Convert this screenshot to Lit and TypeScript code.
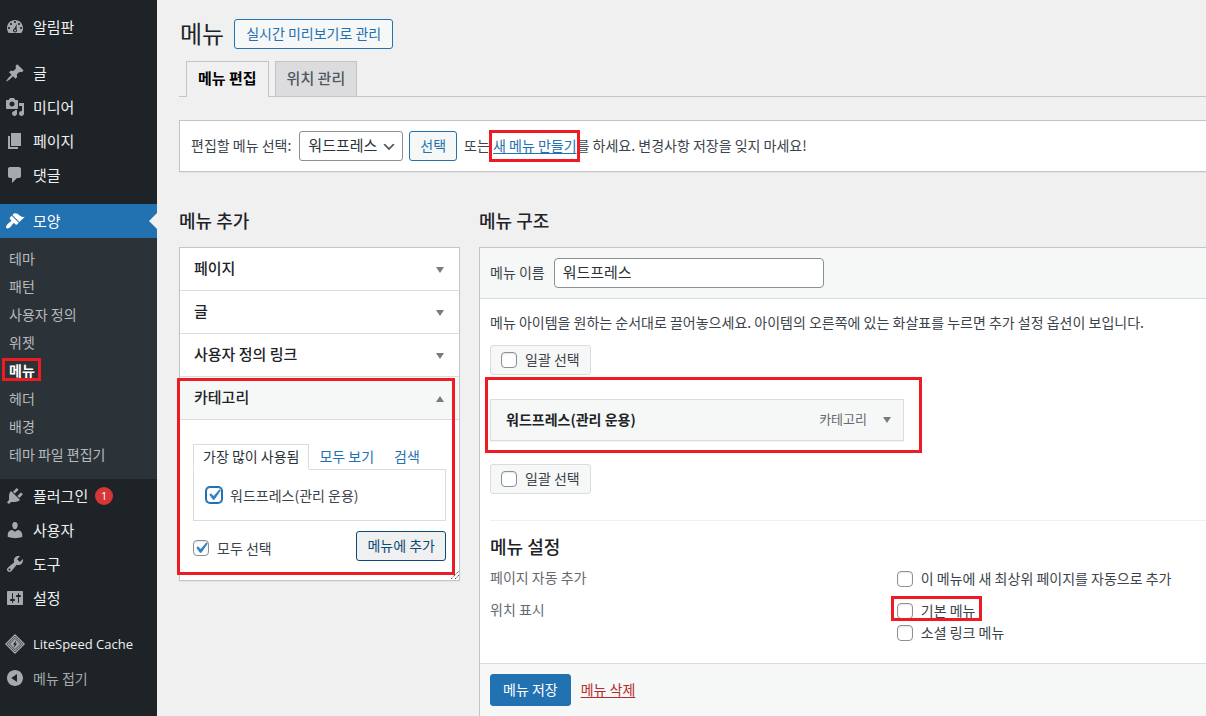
import { LitElement, html, css, svg, nothing } from "lit";
import { customElement, property } from "lit/decorators.js";
import { classMap } from "lit/directives/class-map.js";

const ICONS: Record<string, unknown> = {
  dashboard: svg`<path fill-rule="evenodd" d="M3.76 16h12.48c1.1-1.37 1.76-3.11 1.76-5 0-4.42-3.58-8-8-8s-8 3.58-8 8c0 1.89.66 3.63 1.76 5zM10 4c.55 0 1 .45 1 1s-.45 1-1 1-1-.45-1-1 .45-1 1-1zM6 6c.55 0 1 .45 1 1s-.45 1-1 1-1-.45-1-1 .45-1 1-1zM14 6c.55 0 1 .45 1 1s-.45 1-1 1-1-.45-1-1 .45-1 1-1zM4 10c.55 0 1 .45 1 1s-.45 1-1 1-1-.45-1-1 .45-1 1-1zM16 10c.55 0 1 .45 1 1s-.45 1-1 1-1-.45-1-1 .45-1 1-1zM11.7 7l-.2 5.2c.3.4.5.8.5 1.3 0 1.1-.9 2-2 2s-2-.9-2-2c0-1 .7-1.800 1.600-2zM10 12.500a1 1 0 1 0 0 2 1 1 0 0 0 0-2z"/>`,
  post: svg`<path d="M10.44 3.02l1.82-1.82 6.36 6.35-1.83 1.82c-1.05-.68-2.48-.57-3.41.36l-.75.75c-.92.93-1.04 2.35-.35 3.41l-1.83 1.82-2.41-2.41-2.8 2.79c-.42.42-3.38 2.71-3.8 2.29s1.86-3.39 2.28-3.81l2.79-2.79L4.1 9.36l1.83-1.82c1.05.69 2.48.57 3.4-.36l.75-.75c.93-.92 1.05-2.35.36-3.41z"/>`,
  media: svg`<path d="M13 11V4c0-.55-.45-1-1-1h-1.67L9 1H5L3.67 3H2c-.55 0-1 .45-1 1v7c0 .55.45 1 1 1h10c.55 0 1-.45 1-1zM7 4.5c1.38 0 2.5 1.12 2.5 2.5S8.38 9.500 7 9.500 4.500 8.380 4.500 7 5.620 4.500 7 4.500zM14 6h5v10.500c0 1.380-1.120 2.500-2.500 2.500S14 17.880 14 16.500s1.120-2.500 2.500-2.500c.17 0 .34.02.5.05V9h-3V6zm-4 8.050V13h2v3.500c0 1.380-1.120 2.500-2.500 2.500S7 17.880 7 16.500 8.120 14 9.500 14c.17 0 .34.02.5.05z"/>`,
  page: svg`<path d="M6 15V2h10v13H6zm-1 1h8v2H3V5h2v11z"/>`,
  comments: svg`<path d="M5 2h9c1.100 0 2 .9 2 2v7c0 1.100-.9 2-2 2h-2l-5 5v-5H5c-1.100 0-2-.9-2-2V4c0-1.100.9-2 2-2z"/>`,
  appearance: svg`<path d="M14.48 11.06L7.41 3.99l1.5-1.5c.5-.56 2.3-.47 3.51.32 1.21.8 1.43 1.28 2.91 2.1 1.18.64 2.45 1.26 4.45.85zm-.71.71L6.7 4.7 4.93 6.47c-.39.39-.39 1.02 0 1.41l1.06 1.06c.39.39.39 1.03 0 1.42-.6.6-1.43 1.11-2.21 1.69-.35.26-.7.53-1.01.84C1.43 14.23.4 16.08 1.4 17.07c.99 1 2.84-.03 4.18-1.36.31-.31.58-.66.85-1.02.57-.78 1.08-1.61 1.69-2.21.39-.39 1.02-.39 1.41 0l1.06 1.06c.39.39 1.02.39 1.41 0z"/>`,
  plugins: svg`<path d="M13.11 4.36L9.87 7.6 8 5.73l3.24-3.24c.35-.34 1.05-.2 1.56.32.52.51.66 1.21.31 1.55zm-8 1.77l.91-1.12 9.01 9.01-1.19.84c-.71.71-2.63 1.16-3.82 1.16H6.14L4.9 17.26c-.59.59-1.54.59-2.12 0-.59-.58-.59-1.53 0-2.12l1.24-1.24v-3.88c0-1.13.4-3.19 1.09-3.89zm7.26 3.97l3.24-3.24c.34-.35 1.04-.21 1.55.31.52.51.66 1.21.31 1.55l-3.24 3.25z"/>`,
  users: svg`<path d="M10 9.25c-2.27 0-2.73-3.44-2.73-3.44C7 4.02 7.82 2 9.97 2c2.16 0 2.98 2.02 2.71 3.81 0 0-.41 3.44-2.68 3.44zm0 2.57L12.72 10c2.39 0 4.52 2.33 4.52 4.53v2.49s-3.65 1.13-7.24 1.13c-3.65 0-7.24-1.13-7.24-1.13v-2.49c0-2.25 1.94-4.48 4.47-4.48z"/>`,
  tools: svg`<path d="M16.68 9.77c-1.34 1.34-3.3 1.67-4.95.99l-5.41 6.52c-.99.99-2.59.99-3.58 0s-.99-2.59 0-3.57l6.52-5.42c-.68-1.65-.35-3.61.99-4.95 1.28-1.28 3.12-1.62 4.72-1.06l-2.89 2.89 2.82 2.82 2.86-2.87c.53 1.58.18 3.39-1.08 4.65zM3.81 16.21c.4.39 1.04.39 1.43 0 .4-.4.4-1.04 0-1.43-.39-.4-1.03-.4-1.43 0-.39.39-.39 1.03 0 1.43z"/>`,
  settings: svg`<path d="M18 16V4c0-.55-.45-1-1-1H3c-.55 0-1 .45-1 1v12c0 .55.45 1 1 1h14c.55 0 1-.45 1-1zM8 11h1c.55 0 1 .45 1 1s-.45 1-1 1H8v1.5c0 .28-.22.5-.5.5s-.5-.22-.5-.5V13H6c-.55 0-1-.45-1-1s.45-1 1-1h1V5.5c0-.28.22-.5.5-.5s.5.22.5.5V11zm5-2h-1c-.55 0-1-.45-1-1s.45-1 1-1h1V5.5c0-.28.22-.5.5-.5s.5.22.5.5V7h1c.55 0 1 .45 1 1s-.45 1-1 1h-1v5.5c0 .28-.22.5-.5.5s-.5-.22-.5-.5V9z"/>`,
  litespeed: svg`<path d="M10 0l10 10-10 10L0 10z"/><path d="M10 2.200l7.800 7.800-7.800 7.800L2.200 10z" fill="none" stroke="#1d2327" stroke-width=".7"/><path d="M10 4.400l5.600 5.600-5.600 5.600L4.400 10z" fill="none" stroke="#1d2327" stroke-width=".7"/><path d="M11.300 6.200L8 10.500h1.600l-1 3.400 3.500-4.500h-1.700z" fill="#1d2327"/>`,
  collapse: svg`<path d="M10 2c4.420 0 8 3.580 8 8s-3.580 8-8 8-8-3.580-8-8 3.580-8 8-8zm2 11.900V6.100L6.200 10z"/>`,
};

@customElement("wp-icon")
class WpIcon extends LitElement {
  @property() name = "";

  static styles = css`
    :host { display: block; width: 20px; height: 20px; flex: none; }
    svg { display: block; width: 100%; height: 100%; fill: currentColor; }
  `;

  render() {
    return html`<svg viewBox="0 0 20 20" aria-hidden="true">${ICONS[this.name]}</svg>`;
  }
}

interface MenuEntry {
  icon: string;
  label: string;
  count?: number;
  latin?: boolean;
  children?: string[];
}

const MENU_GROUPS: MenuEntry[][] = [
  [{ icon: "dashboard", label: "알림판" }],
  [
    { icon: "post", label: "글" },
    { icon: "media", label: "미디어" },
    { icon: "page", label: "페이지" },
    { icon: "comments", label: "댓글" },
  ],
  [
    {
      icon: "appearance",
      label: "모양",
      children: ["테마", "패턴", "사용자 정의", "위젯", "메뉴", "헤더", "배경", "테마 파일 편집기"],
    },
    { icon: "plugins", label: "플러그인", count: 1 },
    { icon: "users", label: "사용자" },
    { icon: "tools", label: "도구" },
    { icon: "settings", label: "설정" },
  ],
  [{ icon: "litespeed", label: "LiteSpeed Cache", latin: true }],
];

@customElement("admin-sidebar")
class AdminSidebar extends LitElement {
  static styles = css`
    :host { display: block; background: #1d2327; padding: 10px 0; }
    ul { list-style: none; margin: 0; padding: 0; }
    .group + .group { margin-top: 12px; }
    .link {
      position: relative; display: flex; align-items: center; gap: 8px; width: 100%;
      height: 34px; padding: 0 5px; box-sizing: border-box; border: 0; background: none;
      font: inherit; font-size: 15px; color: #f0f0f1; text-decoration: none; text-align: left;
      white-space: nowrap;
    }
    .link wp-icon { color: #a7aaad; }
    .latin { font-family: "Open Sans", sans-serif; font-size: 13px; }
    .current { background: #2271b1; color: #fff; }
    .current wp-icon { color: #fff; }
    .current::after {
      content: ""; position: absolute; right: 0; top: 9px;
      border: 8px solid transparent; border-left: 0; border-right-color: #f0f0f1;
    }
    .count {
      width: 18px; height: 18px; border-radius: 9px; background: #d63638; color: #fff;
      font: 11px/18px "Open Sans", sans-serif; text-align: center; margin-left: -1px;
    }
    .submenu { background: #2c3338; padding: 6px 0 11px; }
    .sub {
      display: block; padding: 0 9px; line-height: 28px; font-size: 14px;
      color: #b7babd; text-decoration: none;
    }
    .sub.active { color: #fff; font-weight: 700; }
    .spot { position: relative; display: inline-block; vertical-align: top; }
    .mark {
      position: absolute; inset: 2px -6px 3px -7px;
      border: 3px solid #ed1c24; pointer-events: none;
    }
    .collapse { color: #a7aaad; font-size: 14px; }
  `;

  private entry(e: MenuEntry) {
    return html`<li>
      <a href="#" class=${classMap({ link: true, current: !!e.children, latin: !!e.latin })}>
        <wp-icon name=${e.icon}></wp-icon><span>${e.label}</span>
        ${e.count ? html`<span class="count">${e.count}</span>` : nothing}
      </a>
      ${e.children
        ? html`<ul class="submenu">
            ${e.children.map((c) => {
              const active = c === "메뉴";
              return html`<li><a href="#" class=${classMap({ sub: true, active })}>
                ${active ? html`<span class="spot">${c}<span class="mark"></span></span>` : c}</a></li>`;
            })}
          </ul>`
        : nothing}
    </li>`;
  }

  render() {
    return html`<nav aria-label="관리자 메뉴">
      ${MENU_GROUPS.map((g) => html`<ul class="group">${g.map((e) => this.entry(e))}</ul>`)}
      <button class="link collapse" type="button"><wp-icon name="collapse"></wp-icon><span>메뉴 접기</span></button>
    </nav>`;
  }
}

const controls = css`
  * { box-sizing: border-box; }
  h1, h2, h3, p, ul, dl, dd, fieldset, legend { margin: 0; padding: 0; border: 0; font-weight: 400; }
  a { color: #2271b1; }
  button, input, select { font: inherit; margin: 0; }
  .btn {
    display: inline-flex; align-items: center; justify-content: center; height: 30px; padding: 0 10px 2px;
    border: 1px solid #2271b1; border-radius: 3px; background: #f6f7f7; color: #2271b1;
    font-size: 14px; text-decoration: none; white-space: nowrap;
  }
  .check {
    appearance: none; flex: none; width: 16px; height: 16px; border: 1px solid #8c8f94;
    border-radius: 4px; background: #fff; box-shadow: inset 0 1px 2px rgba(0, 0, 0, 0.1);
  }
  .check:checked {
    background: #fff url("data:image/svg+xml,%3Csvg xmlns='http://www.w3.org/2000/svg' viewBox='0 0 20 20'%3E%3Cpath d='M14.830 4.890l1.340.940-5.810 8.380H9.020L5.780 9.670l1.340-1.250 2.570 2.400z' fill='%233582c4'/%3E%3C/svg%3E") center / 22px 22px no-repeat;
  }
  .option { display: flex; align-items: center; gap: 8px; }
  .mark { position: absolute; border: 3px solid #ed1c24; pointer-events: none; z-index: 1; }
  .arrow { display: block; width: 8px; height: 6px; fill: #787c82; }
`;

const down = html`<svg class="arrow" viewBox="0 0 8 6" aria-hidden="true"><path d="M0 0h8L4 6z"/></svg>`;
const up = html`<svg class="arrow" viewBox="0 0 8 6" aria-hidden="true"><path d="M0 6h8L4 0z"/></svg>`;

@customElement("add-items-panel")
class AddItemsPanel extends LitElement {
  static styles = [
    controls,
    css`
      :host { display: block; }
      .box { position: relative; background: #fff; border: 1px solid #c3c4c7; box-shadow: 0 1px 1px rgba(0, 0, 0, 0.04); }
      .head {
        display: flex; align-items: center; justify-content: space-between; width: 100%; height: 43px;
        padding: 0 15px 2px 14px; border: 0; border-bottom: 1px solid #dcdcde; background: #fff;
        color: #1d2327; font-size: 15px; font-weight: 500;
      }
      .head .arrow { margin-top: 4px; }
      .section { position: relative; }
      .section .head.open { background: #f6f7f7; }
      .body { padding: 24px 13px 19px; }
      .tabs { display: flex; height: 26px; margin-bottom: -1px; }
      .tab { padding: 0 9px; border: 1px solid transparent; line-height: 22px; font-size: 14px; text-decoration: none; white-space: nowrap; }
      .tab.on { border-color: #dcdcde; border-bottom-color: #fff; background: #fff; color: #2c3338; position: relative; }
      .list { border: 1px solid #dcdcde; height: 52px; padding: 0 12px; display: flex; align-items: center; }
      .focus { border-color: #2271b1; box-shadow: 0 0 0 1px #2271b1; }
      .actions { display: flex; align-items: center; justify-content: space-between; margin-top: 10px; }
      .actions .option { padding-top: 3px; }
      .add { background: #f0f0f1; border-color: #0a4b78; color: #0a4b78; }
      .section .mark { inset: 1px 4px 5px -3px; }
      .grip { position: absolute; right: 0; bottom: 1px; width: 8px; height: 8px; stroke: #50575e; fill: none; z-index: 2; }
    `,
  ];

  render() {
    return html`<div class="box">
      ${["페이지", "글", "사용자 정의 링크"].map(
        (t) => html`<button class="head" type="button" aria-expanded="false">${t}${down}</button>`,
      )}
      <div class="section">
        <button class="head open" type="button" aria-expanded="true">카테고리${up}</button>
        <div class="body">
          <div class="tabs">
            <a href="#" class="tab on">가장 많이 사용됨</a>
            <a href="#" class="tab">모두 보기</a>
            <a href="#" class="tab">검색</a>
          </div>
          <div class="list">
            <label class="option"><input class="check focus" type="checkbox" checked />워드프레스(관리 운용)</label>
          </div>
          <div class="actions">
            <label class="option"><input class="check" type="checkbox" checked />모두 선택</label>
            <button class="btn add" type="button">메뉴에 추가</button>
          </div>
        </div>
        <span class="mark"></span>
      </div>
      <svg class="grip" viewBox="0 0 8 8" aria-hidden="true"><path d="M0 8L8 0M4 8l4-4" stroke-dasharray="1.500 .6"/></svg>
    </div>`;
  }
}

@customElement("menu-structure")
class MenuStructure extends LitElement {
  static styles = [
    controls,
    css`
      :host { display: flex; flex-direction: column; flex: 1; border: 1px solid #c3c4c7; border-right: 0; border-bottom: 0; background: #fff; }
      .bar { background: #f6f7f7; padding: 10px; display: flex; align-items: center; gap: 9px; }
      .top { border-bottom: 1px solid #dcdcde; height: 51px; }
      .top label { padding-bottom: 2px; }
      .name {
        width: 270px; height: 30px; padding: 0 8px 3px; border: 1px solid #8c8f94; border-radius: 4px;
        background: #fff; color: #2c3338; font-size: 15px;
      }
      .content { padding: 13px 0 20px 10px; }
      .hint { line-height: 20px; margin-bottom: 13px; }
      .bulk {
        display: inline-flex; height: 30px; padding: 0 10px 2px; border: 1px solid #dcdcde; border-radius: 3px;
        background: #f6f7f7; vertical-align: top;
      }
      .option .check { margin-top: 2px; }
      .items { position: relative; margin: 24px 0 23px; width: 414px; max-width: 100%; }
      .item {
        display: flex; align-items: center; height: 42px; padding: 0 12px 2px 15px; gap: 16px;
        border: 1px solid #dcdcde; background: #f6f7f7; box-shadow: 0 1px 1px rgba(0, 0, 0, 0.04);
      }
      .item .arrow { margin-top: 2px; }
      .title { flex: 1; font-weight: 700; color: #1d2327; }
      .type { color: #646970; font-size: 13px; }
      .items .mark { inset: -22px -18px -12px -5px; }
      .settings { margin-top: 26px; border-top: 1px solid #f0f0f1; padding-top: 12px; }
      h3 { font-size: 18px; line-height: 26px; font-weight: 500; color: #1d2327; margin-bottom: 8px; }
      .row { display: grid; grid-template-columns: 25fr 19fr; line-height: 22px; margin-bottom: 10px; }
      .row:last-child { margin-bottom: 0; }
      .row dt { color: #646970; line-height: 20px; }
      .spot { position: relative; width: max-content; }
      .spot .mark { inset: -3px -7px 0 -6px; }
      .foot { flex: 1; align-items: flex-start; border-top: 1px solid #dcdcde; gap: 10px; }
      .save { height: 32px; padding: 0 12px 2px; background: #2271b1; color: #fff; }
      .delete { color: #b32d2e; line-height: 30px; text-underline-offset: 2px; }
    `,
  ];

  private bulk() {
    return html`<label class="option bulk"><input class="check" type="checkbox" />일괄 선택</label>`;
  }

  render() {
    return html`
      <div class="bar top">
        <label for="menu-name">메뉴 이름</label>
        <input class="name" id="menu-name" type="text" value="워드프레스" />
      </div>
      <div class="content">
        <p class="hint">메뉴 아이템을 원하는 순서대로 끌어놓으세요. 아이템의 오른쪽에 있는 화살표를 누르면 추가 설정 옵션이 보입니다.</p>
        ${this.bulk()}
        <div class="items">
          <div class="item"><span class="title">워드프레스(관리 운용)</span><span class="type">카테고리</span>${down}</div>
          <span class="mark"></span>
        </div>
        ${this.bulk()}
        <div class="settings">
          <h3>메뉴 설정</h3>
          <dl>
            <div class="row">
              <dt>페이지 자동 추가</dt>
              <dd><label class="option"><input class="check" type="checkbox" />이 메뉴에 새 최상위 페이지를 자동으로 추가</label></dd>
            </div>
            <div class="row">
              <dt>위치 표시</dt>
              <dd>
                <label class="option spot"><input class="check" type="checkbox" />기본 메뉴<span class="mark"></span></label>
                <label class="option"><input class="check" type="checkbox" />소셜 링크 메뉴</label>
              </dd>
            </div>
          </dl>
        </div>
      </div>
      <div class="bar foot">
        <button class="btn save" type="button">메뉴 저장</button>
        <a href="#" class="delete">메뉴 삭제</a>
      </div>
    `;
  }
}

@customElement("app-root")
class AppRoot extends LitElement {
  static styles = [
    controls,
    css`
      :host {
        display: grid; grid-template-columns: 157px minmax(0, 1fr); height: 100vh; overflow: hidden;
        background: #f0f0f1; color: #3c434a; font: 14px/20px "Noto Sans CJK KR", sans-serif;
      }
      main { display: flex; flex-direction: column; padding: 19px 0 0 22px; min-width: 0; }
      .heading { display: flex; align-items: center; gap: 10px; height: 30px; margin-bottom: 12px; padding-left: 1px; }
      .heading .btn { padding: 0 11px 2px; }
      h1 { font-size: 24px; line-height: 30px; color: #1d2327; padding-bottom: 3px; }
      .tabs { display: flex; gap: 6px; height: 36px; padding-left: 7px; border-bottom: 1px solid #c3c4c7; }
      .tab {
        height: 35px; padding: 0 11px; border: 1px solid #c3c4c7; border-bottom: 0; background: #dcdcde;
        color: #50575e; font-size: 15px; line-height: 32px; font-weight: 500; text-decoration: none;
      }
      .tab.on { height: 36px; background: #f0f0f1; color: #000; font-weight: 700; }
      .manage {
        display: flex; align-items: center; height: 52px; margin-top: 23px; padding-left: 11px;
        border: 1px solid #c3c4c7; border-right: 0; background: #fff; box-shadow: 0 1px 1px rgba(0, 0, 0, 0.04);
        white-space: nowrap;
      }
      .manage label, .manage p { padding-bottom: 2px; }
      .picker {
        appearance: none; width: 104px; height: 30px; margin: 0 6px 0 8px; padding: 0 24px 2px 8px;
        border: 1px solid #8c8f94; border-radius: 3px; color: #2c3338; font-size: 15px;
        background: #fff url("data:image/svg+xml,%3Csvg xmlns='http://www.w3.org/2000/svg' viewBox='0 0 20 20'%3E%3Cpath d='M5 6l5 5 5-5 2 1-7 7-7-7 2-1z' fill='%23555'/%3E%3C/svg%3E") right 5px top 55% / 16px 16px no-repeat;
      }
      .manage p { margin-left: 7px; }
      .spot { position: relative; display: inline-block; }
      .spot .mark { inset: -5px -3px -7px -4px; }
      .manage a { text-underline-offset: 2px; }
      .columns { display: grid; grid-template-columns: 281px minmax(0, 1fr); gap: 19px; flex: 1; margin-top: 35px; }
      .column { display: flex; flex-direction: column; }
      h2 { font-size: 18px; line-height: 26px; font-weight: 500; color: #1d2327; margin-bottom: 14px; }
    `,
  ];

  render() {
    return html`
      <admin-sidebar></admin-sidebar>
      <main>
        <div class="heading">
          <h1>메뉴</h1>
          <a href="#" class="btn">실시간 미리보기로 관리</a>
        </div>
        <nav class="tabs">
          <a href="#" class="tab on">메뉴 편집</a>
          <a href="#" class="tab">위치 관리</a>
        </nav>
        <div class="manage">
          <label for="menu-picker">편집할 메뉴 선택:</label>
          <select class="picker" id="menu-picker"><option>워드프레스</option></select>
          <button class="btn" type="button">선택</button>
          <p>또는 <span class="spot"><a href="#">새 메뉴 만들기</a><span class="mark"></span></span>를 하세요. 변경사항 저장을 잊지 마세요!</p>
        </div>
        <div class="columns">
          <section class="column"><h2>메뉴 추가</h2><add-items-panel></add-items-panel></section>
          <section class="column"><h2>메뉴 구조</h2><menu-structure></menu-structure></section>
        </div>
      </main>
    `;
  }
}
